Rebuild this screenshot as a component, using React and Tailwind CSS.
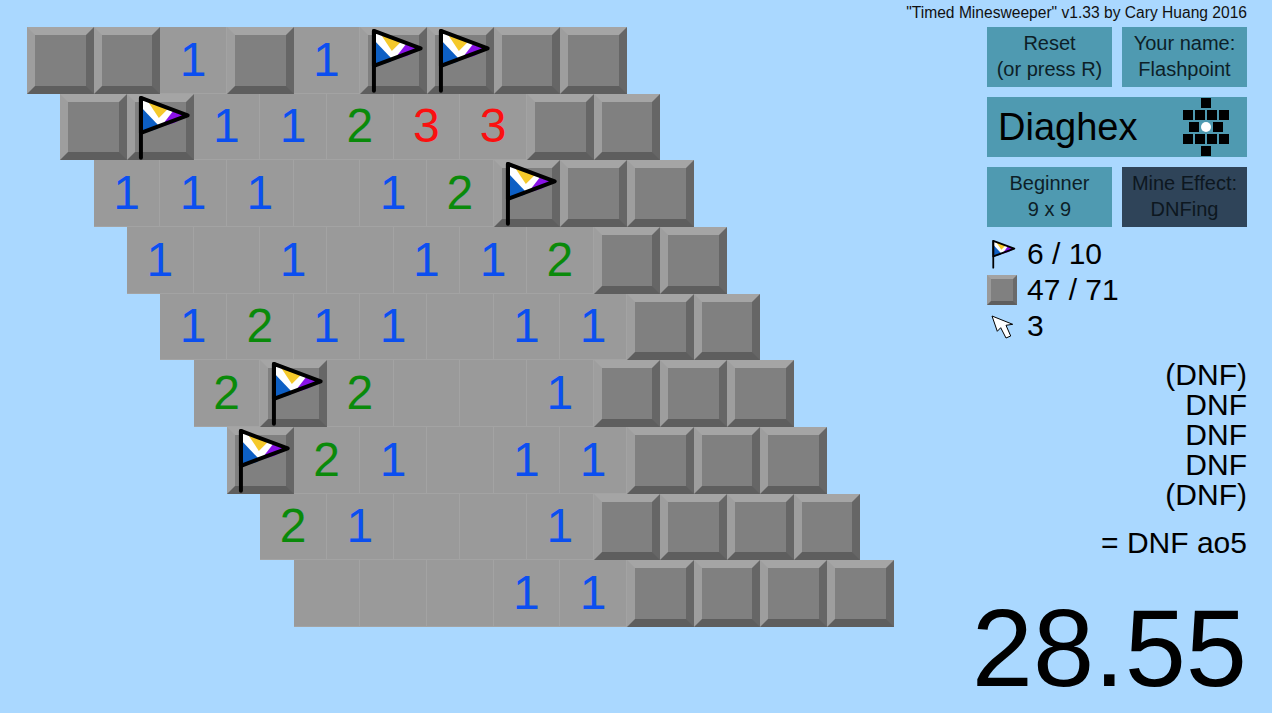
import React from 'react';

const CELL = 66.67;

const board = [
  '##1#1FF##',
  '#F11233##',
  '111.12F##',
  '1.1.112##',
  '1211.11##',
  '2F2..1###',
  'F21.11###',
  '21..1####',
  '...11####',
];

const numColors = {
  1: 'text-[#0b4ff0]',
  2: 'text-[#0a8a0a]',
  3: 'text-[#fb1010]',
};

const Flag = ({ className }) => (
  <svg viewBox="0 0 67 67" className={className}>
    <polygon points="14,4 61,21.5 14,39" fill="#fff" />
    <polygon points="14,13 31,31 31,35 14,40" fill="#0d5fc4" />
    <polygon points="20,6 42,14 32,24" fill="#f5c92a" />
    <polygon points="34,33 46,17.5 61,21.5 48,29" fill="#8a12e8" />
    <polygon points="14,4 61,21.5 14,39" fill="none" stroke="#000" strokeWidth="4" strokeLinejoin="round" />
    <line x1="14" y1="4" x2="14" y2="64" stroke="#000" strokeWidth="4" strokeLinecap="round" />
  </svg>
);

const Raised = ({ small, children }) => (
  <div className={small
    ? 'relative w-[30px] h-[30px] bg-[#808080] border-[4px] border-t-[#a3a3a3] border-l-[#9a9a9a] border-r-[#6a6a6a] border-b-[#5e5e5e]'
    : 'relative w-[66.67px] h-[66.67px] shrink-0 bg-[#808080] border-[8px] border-t-[#a5a5a5] border-l-[#9e9e9e] border-r-[#666666] border-b-[#5e5e5e]'}>
    {children}
  </div>
);

const Cell = ({ value }) => {
  if (value === '#') return <Raised />;
  if (value === 'F') {
    return (
      <Raised>
        <Flag className="absolute -left-[8px] -top-[8px] w-[66.67px] h-[66.67px] overflow-visible" />
      </Raised>
    );
  }
  return (
    <div className="w-[66.67px] h-[66.67px] shrink-0 flex items-center justify-center bg-[#9a9a9a] border-r border-b border-[#a3a3a3] text-[48px] leading-none">
      {value !== '.' && <span className={numColors[value]}>{value}</span>}
    </div>
  );
};

const Button = ({ dark, children }) => (
  <div className={`w-[125px] h-[60px] pb-[2px] flex flex-col items-center justify-center text-[20px] leading-[26px] ${dark ? 'bg-[#2f4459] text-[#0d1720]' : 'bg-[#4f9ab1] text-[#0d1f28]'}`}>
    {children}
  </div>
);

const Cursor = () => (
  <svg viewBox="0 0 23 24" className="w-[23px] h-[24px]">
    <path d="M1 1 L6.3 16.3 L9.7 12.7 L15 23 L19.7 21 L15 10.3 L21.7 9.3 Z" fill="#fff" stroke="#000" strokeWidth="1" strokeLinejoin="miter" />
  </svg>
);

const ShapeIcon = () => (
  <svg viewBox="0 0 46 58" className="w-[46px] h-[58px]">
    <rect x="18" y="0" width="10" height="10" />
    {[0, 12, 24, 36].map((x) => <rect key={x} x={x} y="12" width="10" height="10" />)}
    {[6, 30].map((x) => <rect key={x} x={x} y="24" width="10" height="10" />)}
    {[0, 12, 24, 36].map((x) => <rect key={x} x={x} y="36" width="10" height="10" />)}
    <rect x="18" y="48" width="10" height="10" />
    <circle cx="23" cy="29" r="5" fill="#fff" />
  </svg>
);

export default function App() {
  return (
    <div className="w-[1272px] h-[713px] overflow-hidden bg-[#aad8ff] flex font-['Liberation_Sans',sans-serif] text-[#111]">
      <div className="w-[987px] shrink-0 pt-[27px] pl-[27px] flex flex-col">
        {board.map((row, r) => (
          <div key={r} className="flex h-[66.67px]" style={{ marginLeft: r * CELL / 2 }}>
            {row.split('').map((v, c) => <Cell key={c} value={v} />)}
          </div>
        ))}
      </div>

      <div className="w-[260px] shrink-0 flex flex-col">
        <div className="h-[27px] whitespace-nowrap flex justify-end items-center text-[15.6px] -mt-[1px]">
          "Timed Minesweeper" v1.33 by Cary Huang 2016
        </div>
        <div className="flex gap-[10px] mt-[1px]">
          <Button><span>Reset</span><span>(or press R)</span></Button>
          <Button><span>Your name:</span><span>Flashpoint</span></Button>
        </div>
        <div className="mt-[10px] h-[60px] bg-[#4f9ab1] flex items-center justify-between pl-[11px] pr-[18px]">
          <span className="text-[38px] text-[#000]">Diaghex</span>
          <ShapeIcon />
        </div>
        <div className="flex gap-[10px] mt-[10px]">
          <Button><span>Beginner</span><span>9 x 9</span></Button>
          <Button dark><span>Mine Effect:</span><span>DNFing</span></Button>
        </div>

        <div className="mt-[9px] flex flex-col text-[30px] leading-[36px] text-black">
          <div className="flex items-center h-[36px] gap-[10px]">
            <div className="w-[30px] h-[30px]"><Flag className="w-[30px] h-[30px]" /></div>
            <span>6 / 10</span>
          </div>
          <div className="flex items-center h-[36px] gap-[10px]">
            <Raised small />
            <span>47 / 71</span>
          </div>
          <div className="flex items-center h-[36px] gap-[10px]">
            <div className="w-[30px] pl-[4px] pt-[2px]"><Cursor /></div>
            <span>3</span>
          </div>
        </div>

        <div className="mt-[16px] flex flex-col items-end text-[30px] leading-[30px] text-black">
          <span>(DNF)</span>
          <span>DNF</span>
          <span>DNF</span>
          <span>DNF</span>
          <span>(DNF)</span>
          <span className="mt-[18px]">= DNF ao5</span>
        </div>

        <div className="mt-auto flex justify-end text-[110px] leading-[130px] text-black whitespace-nowrap">
          28.55
        </div>
      </div>
    </div>
  );
}
